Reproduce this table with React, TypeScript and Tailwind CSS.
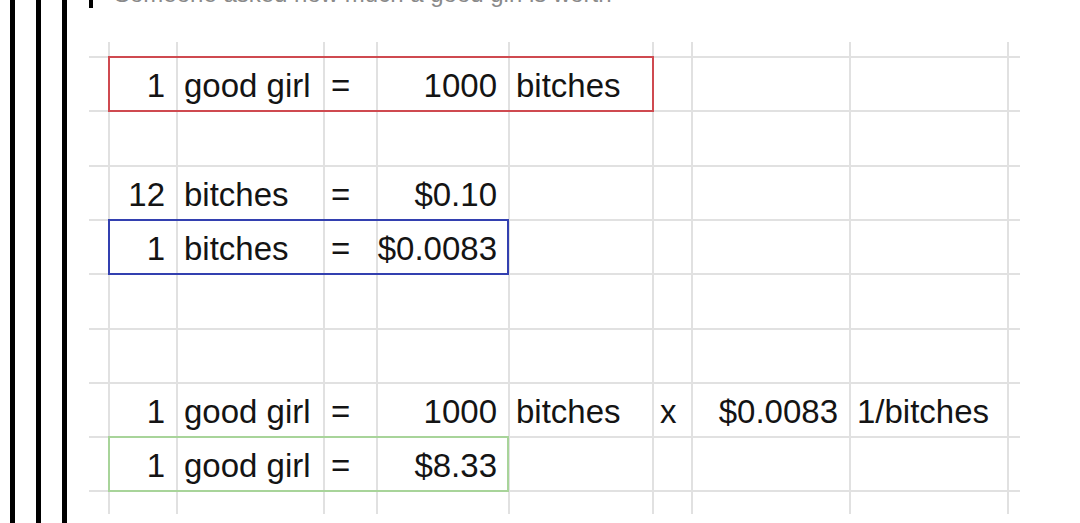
import React from 'react';

type Cell = { text: string; right?: boolean };

const colW = ['w-[68px]', 'w-[147px]', 'w-[53px]', 'w-[132px]', 'w-[144px]', 'w-[39px]', 'w-[158px]', 'w-[160px]'];

const rows: { h: string; cells: Cell[] }[] = [
  { h: 'h-[54px]', cells: [{ text: '1', right: true }, { text: 'good girl' }, { text: '=' }, { text: '1000', right: true }, { text: 'bitches' }] },
  { h: 'h-[55px]', cells: [] },
  { h: 'h-[54px]', cells: [{ text: '12', right: true }, { text: 'bitches' }, { text: '=' }, { text: '$0.10', right: true }] },
  { h: 'h-[54px]', cells: [{ text: '1', right: true }, { text: 'bitches' }, { text: '=' }, { text: '$0.0083', right: true }] },
  { h: 'h-[55px]', cells: [] },
  { h: 'h-[54px]', cells: [] },
  {
    h: 'h-[54px]',
    cells: [
      { text: '1', right: true },
      { text: 'good girl' },
      { text: '=' },
      { text: '1000', right: true },
      { text: 'bitches' },
      { text: 'x' },
      { text: '$0.0083', right: true },
      { text: '1/bitches' },
    ],
  },
  { h: 'h-[54px]', cells: [{ text: '1', right: true }, { text: 'good girl' }, { text: '=' }, { text: '$8.33', right: true }] },
];

function GridRow({ h, cells, top = true }: { h: string; cells: Cell[]; top?: boolean }) {
  const edge = top ? 'border-t-2 border-[#e1e1e1]' : '';
  return (
    <div className={`flex ${h}`}>
      <div className={`w-[19px] ${edge}`} />
      {colW.map((w, i) => {
        const c = cells[i];
        return (
          <div
            key={i}
            className={`${w} ${edge} border-l-2 border-[#e1e1e1] ${i === 7 ? 'border-r-2' : ''} flex items-center pt-[3px] whitespace-nowrap overflow-visible ${
              c?.right ? 'justify-end pr-[11px]' : 'justify-start pl-[6px]'
            }`}
          >
            {c && <span className="text-[33px] leading-none text-[#141414]">{c.text}</span>}
          </div>
        );
      })}
      <div className={`w-[11px] ${edge}`} />
    </div>
  );
}

export default function App() {
  return (
    <div className="flex h-[523px] w-[1080px] overflow-hidden bg-white" style={{ fontFamily: '"Liberation Sans", Arial, sans-serif' }}>
      <div className="flex gap-[21px] pl-[10px]">
        <div className="w-[5px] h-full bg-black" />
        <div className="w-[5px] h-full bg-black" />
        <div className="w-[5px] h-full bg-black" />
      </div>
      <div className="flex flex-col ml-[22px]">
        <div className="flex items-start h-[42px]">
          <div className="w-[4px] h-[8px] bg-black" />
          <div className="ml-[21px] -mt-[18px] text-[24px] leading-none text-[#8a8a8a] whitespace-nowrap">
            Someone asked how much a good girl is worth
          </div>
        </div>
        <div className="relative">
          <GridRow h="h-[14px]" cells={[]} top={false} />
          {rows.map((r, i) => (
            <GridRow key={i} h={r.h} cells={r.cells} />
          ))}
          <GridRow h="h-[24px]" cells={[]} />
          <div className="absolute left-[19px] top-[14px] w-[546px] h-[56px] border-2 border-[#cf4a50]" />
          <div className="absolute left-[19px] top-[177px] w-[401px] h-[56px] border-2 border-[#3340b0]" />
          <div className="absolute left-[19px] top-[394px] w-[401px] h-[56px] border-2 border-[#a8d49a]" />
        </div>
      </div>
    </div>
  );
}
